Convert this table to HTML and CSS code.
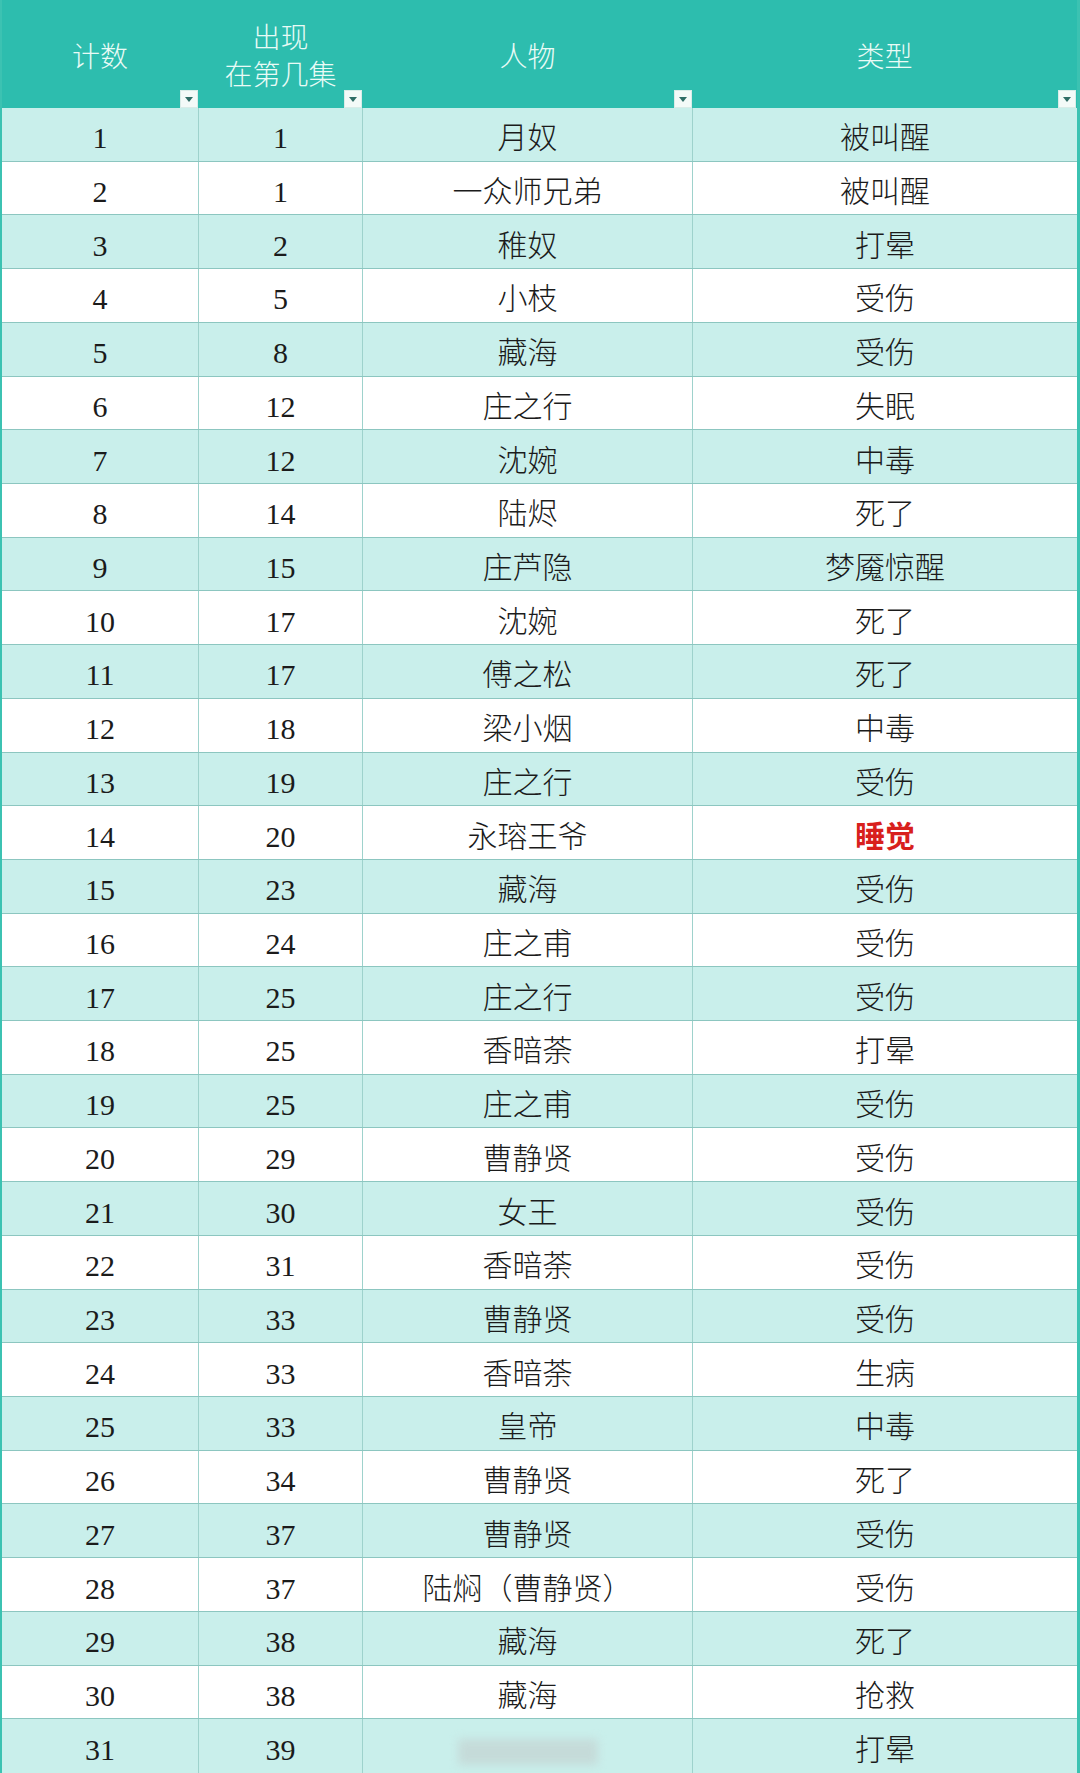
FILE: index.html
```html
<!DOCTYPE html>
<html lang="zh-CN">
<head>
<meta charset="utf-8">
<title>表格</title>
<link rel="stylesheet" href="styles.css">
</head>
<body>
<div class="sheet">
  <div class="row head">
    <div class="cell"><span class="htxt">计数</span><span class="filter"></span></div>
    <div class="cell"><span class="htxt two">出现<br>在第几集</span><span class="filter"></span></div>
    <div class="cell"><span class="htxt">人物</span><span class="filter"></span></div>
    <div class="cell"><span class="htxt">类型</span><span class="filter"></span></div>
  </div>
  <div class="row odd"><div class="cell">1</div><div class="cell">1</div><div class="cell">月奴</div><div class="cell">被叫醒</div></div>
  <div class="row"><div class="cell">2</div><div class="cell">1</div><div class="cell">一众师兄弟</div><div class="cell">被叫醒</div></div>
  <div class="row odd"><div class="cell">3</div><div class="cell">2</div><div class="cell">稚奴</div><div class="cell">打晕</div></div>
  <div class="row"><div class="cell">4</div><div class="cell">5</div><div class="cell">小枝</div><div class="cell">受伤</div></div>
  <div class="row odd"><div class="cell">5</div><div class="cell">8</div><div class="cell">藏海</div><div class="cell">受伤</div></div>
  <div class="row"><div class="cell">6</div><div class="cell">12</div><div class="cell">庄之行</div><div class="cell">失眠</div></div>
  <div class="row odd"><div class="cell">7</div><div class="cell">12</div><div class="cell">沈婉</div><div class="cell">中毒</div></div>
  <div class="row"><div class="cell">8</div><div class="cell">14</div><div class="cell">陆烬</div><div class="cell">死了</div></div>
  <div class="row odd"><div class="cell">9</div><div class="cell">15</div><div class="cell">庄芦隐</div><div class="cell">梦魇惊醒</div></div>
  <div class="row"><div class="cell">10</div><div class="cell">17</div><div class="cell">沈婉</div><div class="cell">死了</div></div>
  <div class="row odd"><div class="cell">11</div><div class="cell">17</div><div class="cell">傅之松</div><div class="cell">死了</div></div>
  <div class="row"><div class="cell">12</div><div class="cell">18</div><div class="cell">梁小烟</div><div class="cell">中毒</div></div>
  <div class="row odd"><div class="cell">13</div><div class="cell">19</div><div class="cell">庄之行</div><div class="cell">受伤</div></div>
  <div class="row"><div class="cell">14</div><div class="cell">20</div><div class="cell">永瑢王爷</div><div class="cell red">睡觉</div></div>
  <div class="row odd"><div class="cell">15</div><div class="cell">23</div><div class="cell">藏海</div><div class="cell">受伤</div></div>
  <div class="row"><div class="cell">16</div><div class="cell">24</div><div class="cell">庄之甫</div><div class="cell">受伤</div></div>
  <div class="row odd"><div class="cell">17</div><div class="cell">25</div><div class="cell">庄之行</div><div class="cell">受伤</div></div>
  <div class="row"><div class="cell">18</div><div class="cell">25</div><div class="cell">香暗荼</div><div class="cell">打晕</div></div>
  <div class="row odd"><div class="cell">19</div><div class="cell">25</div><div class="cell">庄之甫</div><div class="cell">受伤</div></div>
  <div class="row"><div class="cell">20</div><div class="cell">29</div><div class="cell">曹静贤</div><div class="cell">受伤</div></div>
  <div class="row odd"><div class="cell">21</div><div class="cell">30</div><div class="cell">女王</div><div class="cell">受伤</div></div>
  <div class="row"><div class="cell">22</div><div class="cell">31</div><div class="cell">香暗荼</div><div class="cell">受伤</div></div>
  <div class="row odd"><div class="cell">23</div><div class="cell">33</div><div class="cell">曹静贤</div><div class="cell">受伤</div></div>
  <div class="row"><div class="cell">24</div><div class="cell">33</div><div class="cell">香暗荼</div><div class="cell">生病</div></div>
  <div class="row odd"><div class="cell">25</div><div class="cell">33</div><div class="cell">皇帝</div><div class="cell">中毒</div></div>
  <div class="row"><div class="cell">26</div><div class="cell">34</div><div class="cell">曹静贤</div><div class="cell">死了</div></div>
  <div class="row odd"><div class="cell">27</div><div class="cell">37</div><div class="cell">曹静贤</div><div class="cell">受伤</div></div>
  <div class="row"><div class="cell">28</div><div class="cell">37</div><div class="cell">陆焖（曹静贤）</div><div class="cell">受伤</div></div>
  <div class="row odd"><div class="cell">29</div><div class="cell">38</div><div class="cell">藏海</div><div class="cell">死了</div></div>
  <div class="row"><div class="cell">30</div><div class="cell">38</div><div class="cell">藏海</div><div class="cell">抢救</div></div>
  <div class="row odd last"><div class="cell">31</div><div class="cell">39</div><div class="cell"><span class="smudge"></span></div><div class="cell">打晕</div></div>
</div>
</body>
</html>
```

FILE: styles.css
```css
html, body {
  margin: 0;
  padding: 0;
  background: #ffffff;
}

.sheet {
  width: 1080px;
  height: 1773px;
  box-sizing: border-box;
  display: grid;
  grid-template-rows: 108px repeat(31, 1fr);
  border-left: 2px solid #3cc2b2;
  border-right: 3px solid #3cc2b2;
  font-family: "Liberation Serif", "Noto Sans CJK SC", serif;
  overflow: hidden;
}

.row {
  display: grid;
  grid-template-columns: 197px 164px 330px 1fr;
  border-bottom: 1px solid #8cc6c0;
  background: #ffffff;
  min-height: 0;
}

.row.odd {
  background: #c9efeb;
}

.row.last {
  border-bottom: none;
}

.cell {
  display: flex;
  align-items: center;
  justify-content: center;
  border-right: 1px solid #9ed2cc;
  font-size: 30px;
  font-weight: 300;
  color: #1b1b1b;
  line-height: 1;
  padding-top: 8px;
  min-width: 0;
}

.cell:last-child {
  border-right: none;
}

.cell.red {
  color: #d8201d;
  font-weight: 700;
}

.row.head {
  background: #2dbdae;
  border-bottom: none;
}

.row.head .cell {
  position: relative;
  border-right: 1px solid #2dbdae;
  color: #e9fbf6;
  font-size: 28px;
  padding-top: 6px;
  padding-bottom: 0;
}

.htxt {
  text-align: center;
  line-height: 37px;
}

.filter {
  position: absolute;
  right: 0;
  bottom: 0;
  width: 18px;
  height: 18px;
  background: #f3faf8;
  box-shadow: inset 0 0 0 1px #d9ece8;
}

.filter::after {
  content: "";
  position: absolute;
  left: 5px;
  top: 7px;
  border-left: 4px solid transparent;
  border-right: 4px solid transparent;
  border-top: 5px solid #2f6d66;
}

.smudge {
  display: block;
  width: 140px;
  height: 26px;
  margin-top: 4px;
  background: #c4d3d2;
  filter: blur(5px);
  opacity: 0.7;
}
```
